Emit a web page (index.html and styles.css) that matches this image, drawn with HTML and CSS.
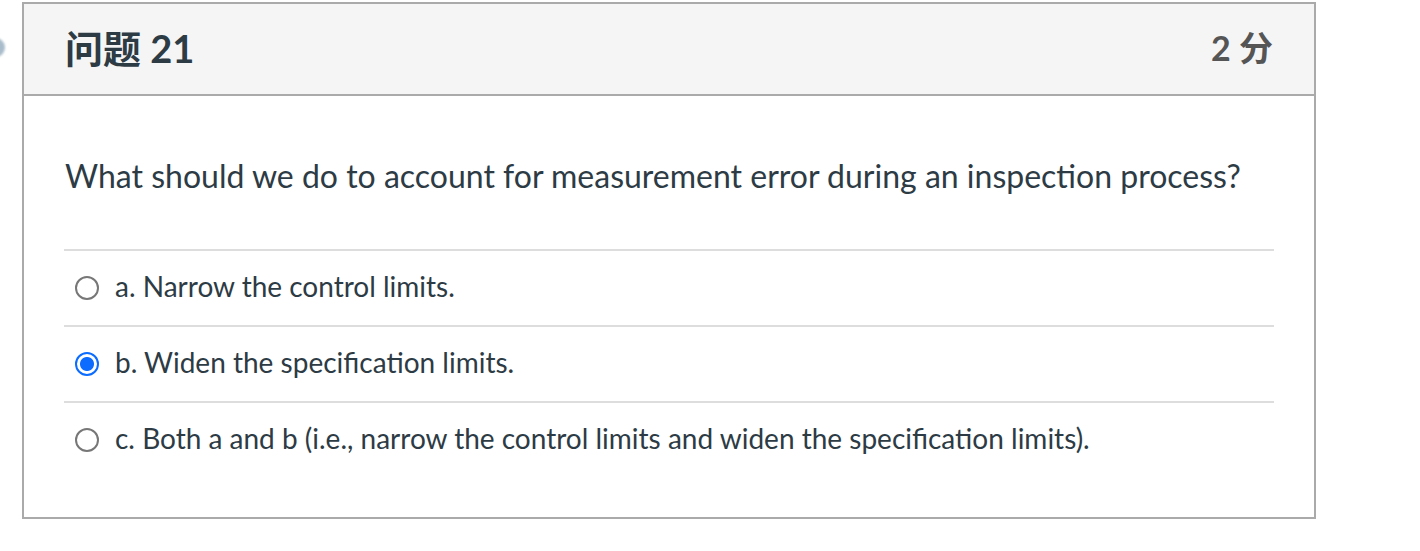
FILE: index.html
```html
<!DOCTYPE html>
<html lang="zh">
<head>
<meta charset="utf-8">
<link rel="stylesheet" href="styles.css">
</head>
<body>
<div class="edge-icon"></div>
<div class="page">
  <div class="card">
    <div class="card-header">
      <h2 class="title">问题 21</h2>
      <div class="points">2 分</div>
    </div>
    <div class="card-body">
      <p class="question">What should we do to account for measurement error during an inspection process?</p>
      <div class="options">
        <label class="option">
          <span class="radio"></span>
          <span class="option-text">a. Narrow the control limits.</span>
        </label>
        <label class="option">
          <span class="radio checked"></span>
          <span class="option-text">b. Widen the specification limits.</span>
        </label>
        <label class="option">
          <span class="radio"></span>
          <span class="option-text">c. Both a and b (i.e., narrow the control limits and widen the specification limits).</span>
        </label>
      </div>
    </div>
  </div>
</div>
</body>
</html>
```
FILE: styles.css
```css
html, body {
  margin: 0;
  padding: 0;
  background: #fff;
}
body {
  font-family: Lato, "Noto Sans CJK SC", sans-serif;
  color: #2d3b45;
  position: relative;
}
.edge-icon {
  position: absolute;
  left: -14px;
  top: 38px;
  width: 19px;
  height: 19px;
  border-radius: 50%;
  background: #a9bccb;
  filter: blur(1px);
}
.page {
  padding: 2px 0 0 22px;
}
.card {
  width: 1294px;
  border: 2px solid #aaaaaa;
  box-sizing: border-box;
}
.card-header {
  height: 92px;
  background: #f5f5f5;
  border-bottom: 2px solid #aaaaaa;
  display: flex;
  align-items: center;
  justify-content: space-between;
  padding: 0 41px 6px 41px;
  box-sizing: border-box;
}
.title {
  margin: 0;
  font-size: 38px;
  font-weight: 700;
  color: #2d3b45;
  font-family: Lato, "Noto Sans CJK SC", sans-serif;
}
.points {
  font-size: 34px;
  font-weight: 700;
  color: #555555;
}
.card-body {
  padding: 0 40px 40px 40px;
}
.question {
  margin: 61px 0 54px 1px;
  font-size: 32px;
  line-height: 38px;
}
.options {
  display: flex;
  flex-direction: column;
}
.option {
  display: flex;
  align-items: center;
  height: 70px;
  border-top: 2px solid #dddddd;
  padding-left: 11px;
  padding-bottom: 4px;
  box-sizing: content-box;
}
.radio {
  width: 20px;
  height: 20px;
  border: 2px solid #777777;
  border-radius: 50%;
  box-sizing: content-box;
  flex: none;
  margin-right: 16px;
  margin-top: 4px;
}
.radio.checked {
  border-color: #0b6cff;
  background: radial-gradient(circle, #0b6cff 0 6.5px, #fff 7.5px);
}
.option-text {
  font-size: 28px;
}
```
